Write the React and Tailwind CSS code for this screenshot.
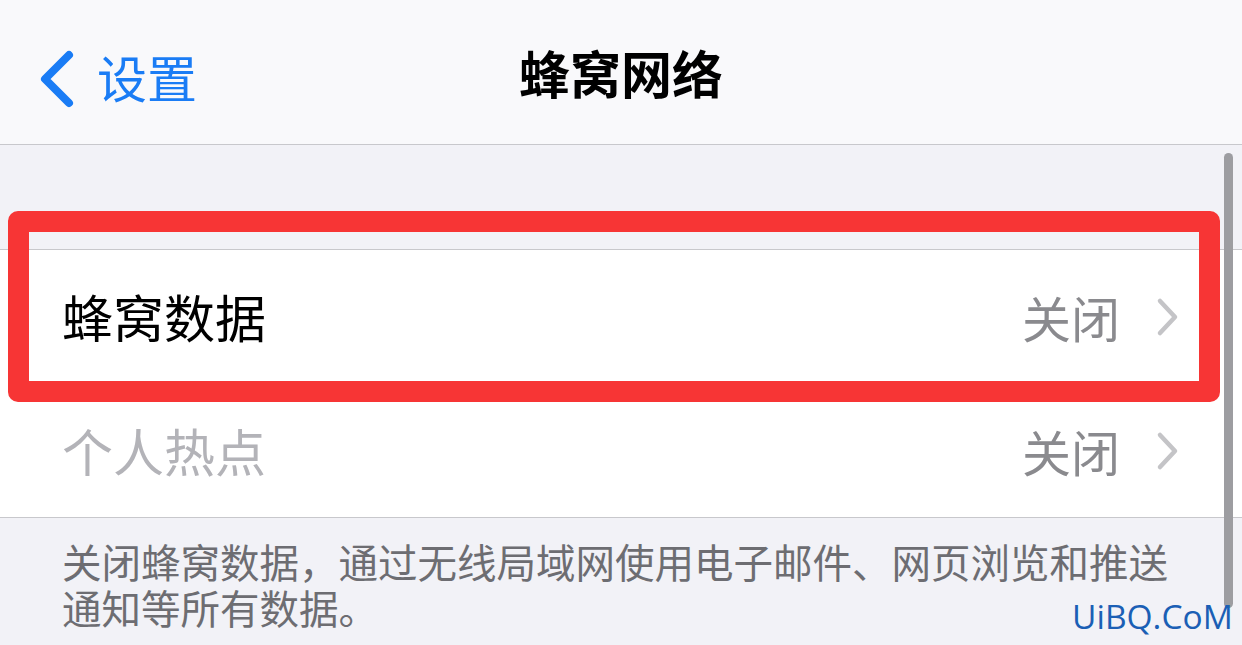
import React from 'react';

const font = { fontFamily: '"Noto Sans CJK SC", "Noto Sans", sans-serif' };

const Chevron = () => (
  <svg width="24" height="40" viewBox="0 0 24 40" className="ml-[36px]">
    <path d="M4 4 L19 20 L4 36" fill="none" stroke="#c4c4c7" strokeWidth="4.5" strokeLinecap="round" strokeLinejoin="round" />
  </svg>
);

const Row = ({ label, value, disabled, last }) => (
  <div className={`h-[134px] flex items-center pl-[62px] pr-[62px] bg-white ${last ? 'border-b border-[#c8c8cc]' : ''}`}>
    <div className={`flex-1 h-full flex items-center ${last ? '' : 'border-b border-[#d1d1d6]'}`}>
      <span className={`text-[51px] leading-none flex-1 ${disabled ? 'text-[#b3b3b8]' : 'text-black'}`}>{label}</span>
      <span className="text-[49px] leading-none text-[#8a8a8e]">{value}</span>
      <Chevron />
    </div>
  </div>
);

export default function App() {
  return (
    <div className="relative w-[1242px] h-[645px] overflow-hidden bg-[#f2f2f7]" style={font}>
      {/* nav bar */}
      <div className="h-[145px] bg-[#f9f9fb] border-b border-[#c8c8cc] relative flex items-center justify-center">
        <div className="absolute left-[39px] top-[50px] flex items-center">
          <svg width="36" height="58" viewBox="0 0 36 58">
            <path d="M30 5 L6 29 L30 53" fill="none" stroke="#1a7cf5" strokeWidth="8" strokeLinecap="round" strokeLinejoin="round" />
          </svg>
          <span className="ml-[22px] mb-[6px] text-[50px] leading-none text-[#1a7cf5]">设置</span>
        </div>
        <span className="text-[51px] leading-none font-bold text-black">蜂窝网络</span>
      </div>

      <div className="h-[104px]" />

      <div className="border-t border-[#c8c8cc]">
        <Row label="蜂窝数据" value="关闭" />
        <Row label="个人热点" value="关闭" disabled last />
      </div>

      <div className="pt-[20px] pl-[62px] pr-[62px] text-[39.5px] leading-[46px] text-[#6d6d72]">
        <p>关闭蜂窝数据，通过无线局域网使用电子邮件、网页浏览和推送</p>
        <p>通知等所有数据。</p>
      </div>

      {/* scroll indicator */}
      <div className="absolute left-[1224px] top-[153px] w-[9px] h-[455px] rounded-full bg-[#9d9da1]" />

      {/* red annotation box */}
      <div className="absolute left-[8px] top-[211px] w-[1212px] h-[191px] border-[21px] border-[#f73535] rounded-[10px]" />

      {/* watermark */}
      <div
        className="absolute left-[1072px] top-[600px] text-[33.5px] leading-none text-[#1b5fb5]"
        style={{ fontFamily: '"Open Sans", sans-serif' }}
      >
        UiBQ.CoM
      </div>
    </div>
  );
}
